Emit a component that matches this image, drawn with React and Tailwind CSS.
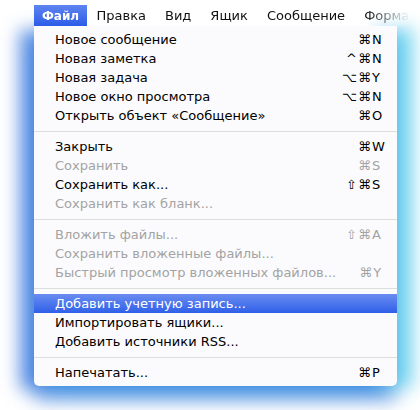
import React from "react";

const font = { fontFamily: '"DejaVu Sans", "Noto Sans", sans-serif' };

// menu contents: null = separator
const items = [
  { label: "Новое сообщение", mods: "", key: "N" },
  { label: "Новая заметка", mods: "^", key: "N" },
  { label: "Новая задача", mods: "⌥", key: "Y" },
  { label: "Новое окно просмотра", mods: "⌥", key: "N" },
  { label: "Открыть объект «Сообщение»", mods: "", key: "O" },
  null,
  { label: "Закрыть", mods: "", key: "W" },
  { label: "Сохранить", mods: "", key: "S", disabled: true },
  { label: "Сохранить как...", mods: "⇧", key: "S" },
  { label: "Сохранить как бланк...", disabled: true },
  null,
  { label: "Вложить файлы...", mods: "⇧", key: "A", disabled: true },
  { label: "Сохранить вложенные файлы...", disabled: true },
  { label: "Быстрый просмотр вложенных файлов...", mods: "", key: "Y", disabled: true },
  null,
  { label: "Добавить учетную запись...", active: true },
  { label: "Импортировать ящики..." },
  { label: "Добавить источники RSS..." },
  null,
  { label: "Напечатать...", mods: "", key: "P" },
];

const menus = ["Файл", "Правка", "Вид", "Ящик", "Сообщение", "Формат"];

function Row({ item }) {
  const color = item.active
    ? "text-white bg-gradient-to-b from-[#6b8cf0] to-[#2f5fe9]"
    : item.disabled
    ? "text-[#a3a3a3]"
    : "text-black";
  return (
    <div className={`flex h-[19px] items-center pl-[21px] pr-[13px] ${color}`}>
      <span className="flex-1 whitespace-nowrap">{item.label}</span>
      {item.key && (
        <span className="flex items-center whitespace-nowrap">
          <span className="w-[22px] text-right">{item.mods}</span>
          <span className="ml-[1px]">⌘</span>
          <span className="w-[13px] pl-[1px]">{item.key}</span>
        </span>
      )}
    </div>
  );
}

export default function App() {
  return (
    <div className="h-[410px] w-[420px] overflow-hidden bg-white" style={font}>
      <div className="ml-[34px] pt-[5px]">
        {/* menu bar */}
        <div className="flex h-[21px] w-[376px] items-center overflow-hidden bg-white text-[13px] text-[#111] shadow-[-8px_-2px_10px_rgba(120,140,170,0.35)] [mask-image:linear-gradient(to_right,black_88%,transparent)]">
          {menus.map((m, i) => (
            <div
              key={m}
              className={
                i === 0
                  ? "flex h-full w-[53px] shrink-0 items-center justify-center bg-gradient-to-b from-[#5f84f0] to-[#2c5ce8] text-[12px] font-bold text-white"
                  : "flex h-full shrink-0 items-center whitespace-nowrap px-[9.5px]"
              }
            >
              {m}
            </div>
          ))}
        </div>

        {/* dropdown */}
        <div className="w-[363px] rounded-b-[5px] bg-[#fbfbfd] py-[4px] text-[13px] shadow-[-14px_4px_18px_rgba(40,110,220,0.75),16px_2px_18px_rgba(70,200,235,0.7),0_16px_18px_rgba(60,130,220,0.55)]">
          {items.map((it, i) =>
            it ? (
              <Row key={i} item={it} />
            ) : (
              <div key={i} className="flex h-[12px] items-center">
                <div className="h-px w-full bg-[#dedede]" />
              </div>
            )
          )}
        </div>
      </div>
    </div>
  );
}
